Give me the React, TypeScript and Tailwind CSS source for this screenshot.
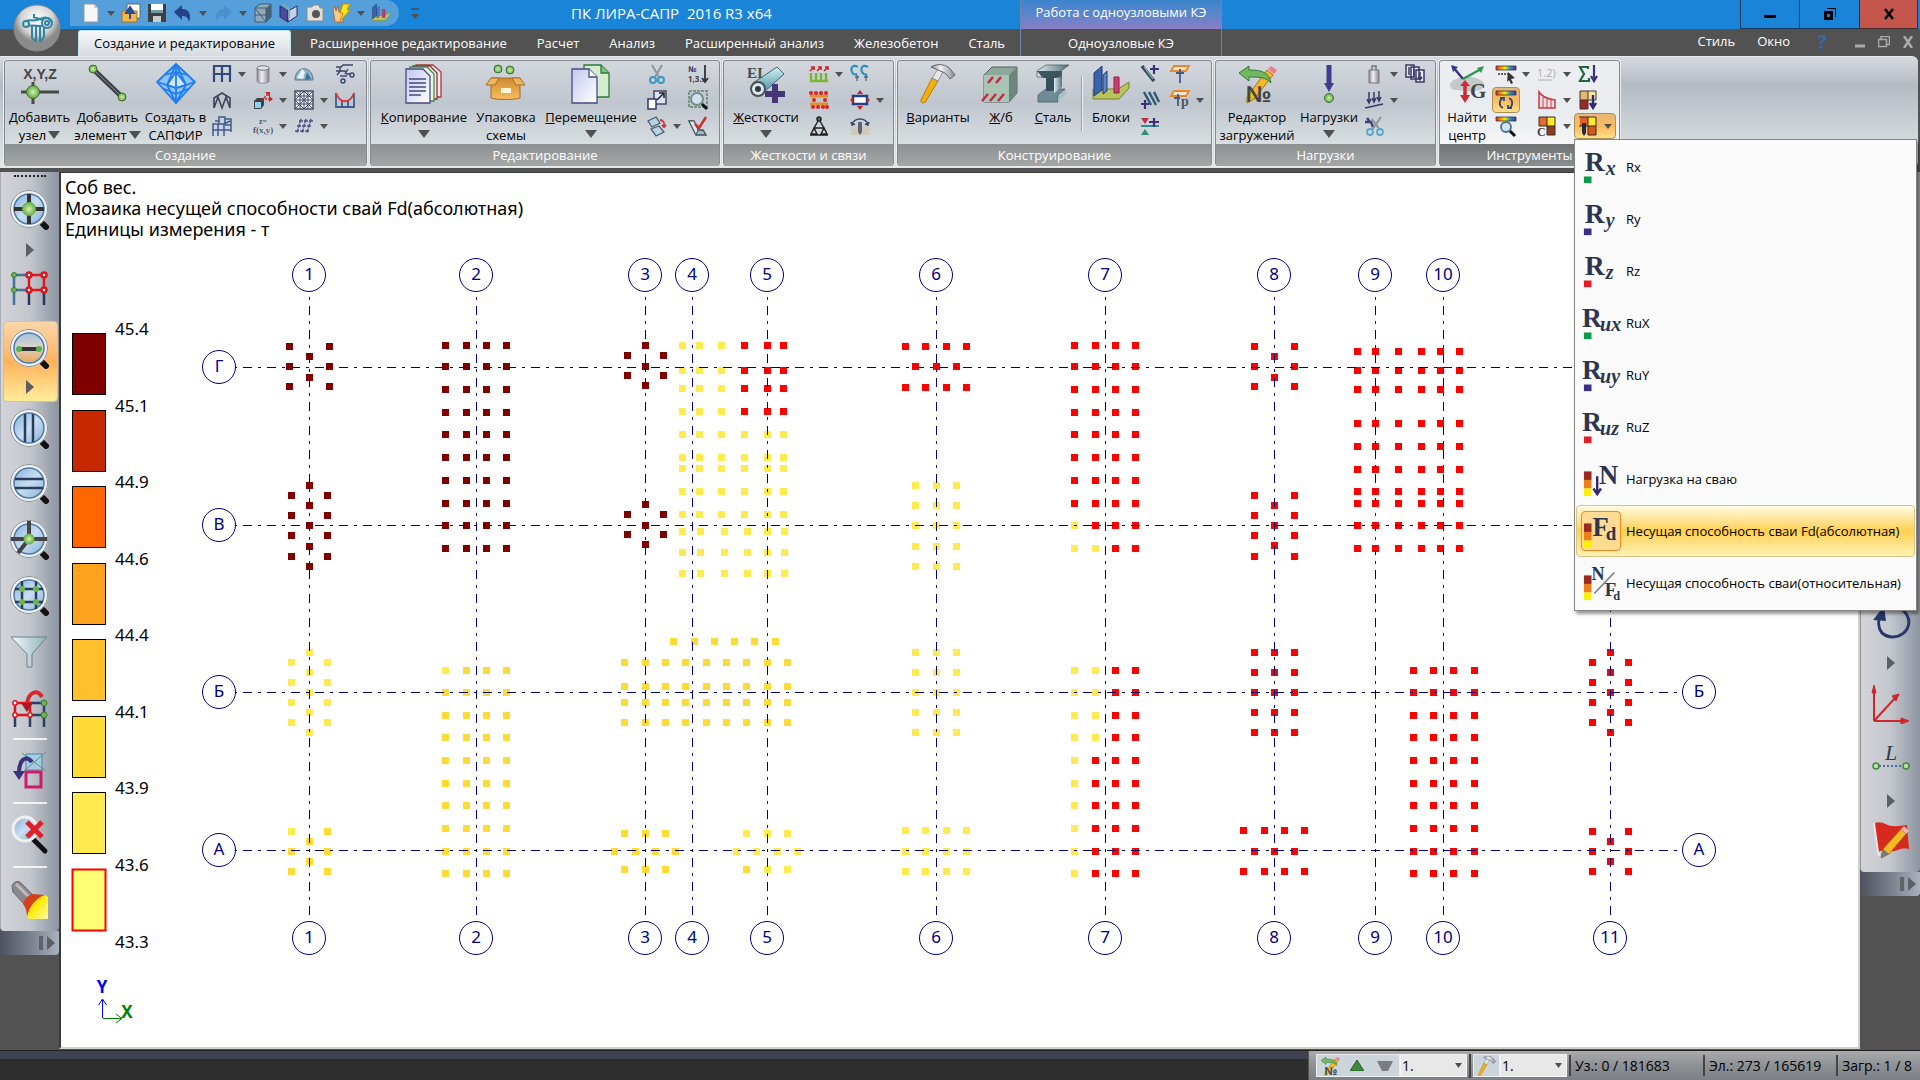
import type { ReactNode } from 'react';

const NAVY = '#000080';
const MAROON = '#800000';
const RED = '#ff0000';
const LIGHT = '#ffeb50';
const GOLD = '#ffdb38';

type Cluster = { c: string; x: number[]; y: number[] };

/* Piles: every cluster is the product of its x and y positions */
const rowsUpper = [345, 366, 389, 412, 434, 457, 480, 503, 525, 548];
const rowsLower = [670, 692, 715, 737, 760, 783, 805, 828, 851, 873];
const rowsB = [652, 672, 692, 712, 732];
const rowsBSide = [662, 682, 702, 722];

const clusters: Cluster[] = [
  { c: MAROON, x: [289, 329], y: [346, 366, 386] },
  { c: MAROON, x: [309], y: [356, 377] },
  { c: MAROON, x: [291, 327], y: [495, 515, 535, 556] },
  { c: MAROON, x: [309], y: [485, 505, 525, 546, 566] },
  { c: MAROON, x: [445, 466, 486, 506], y: rowsUpper },
  { c: MAROON, x: [627, 663], y: [355, 375, 514, 534] },
  { c: MAROON, x: [645], y: [345, 366, 385, 504, 525, 544] },
  { c: LIGHT, x: [682, 699, 721], y: [345, 370, 388, 411] },
  { c: RED, x: [744, 767, 783], y: [345, 370, 388, 411] },
  { c: LIGHT, x: [682, 699, 721, 744, 767, 783], y: [434, 457, 468, 491, 514] },
  { c: LIGHT, x: [682, 700, 724, 747, 767, 784], y: [531, 552, 573] },
  { c: RED, x: [905, 925, 946, 966], y: [346, 387] },
  { c: RED, x: [915, 936, 956], y: [366] },
  { c: LIGHT, x: [915, 936, 956], y: [485, 505, 525, 546, 566] },
  { c: RED, x: [1074, 1095, 1115, 1135], y: rowsUpper.slice(0, 8) },
  { c: LIGHT, x: [1074], y: [525, 548] },
  { c: RED, x: [1095], y: [525] },
  { c: LIGHT, x: [1095], y: [548] },
  { c: RED, x: [1115, 1135], y: [525, 548] },
  { c: RED, x: [1254, 1294], y: [346, 366, 386, 495, 515, 535, 556] },
  { c: RED, x: [1274], y: [356, 377, 505, 525, 545] },
  { c: RED, x: [1357, 1375, 1398, 1421, 1440, 1459], y: [351, 370, 389, 423, 446, 469, 491, 503, 525, 548] },
  { c: LIGHT, x: [291, 327], y: rowsBSide },
  { c: LIGHT, x: [309], y: rowsB },
  { c: LIGHT, x: [291], y: [831] },
  { c: GOLD, x: [327], y: [831] },
  { c: GOLD, x: [291, 327], y: [851, 871] },
  { c: GOLD, x: [309], y: [841, 861] },
  { c: LIGHT, x: [445], y: [670] },
  { c: GOLD, x: [466, 486, 506], y: [670] },
  { c: GOLD, x: [445, 466, 486, 506], y: rowsLower.slice(1) },
  { c: GOLD, x: [673, 694, 714, 734, 754, 775], y: [641] },
  { c: GOLD, x: [624, 645, 665, 685, 706, 726, 746, 767, 787], y: [662, 686, 702, 722] },
  { c: GOLD, x: [624, 645, 665], y: [833, 869] },
  { c: GOLD, x: [614, 635, 655, 675], y: [851] },
  { c: LIGHT, x: [746, 767, 787], y: [833] },
  { c: LIGHT, x: [736, 756, 777, 797], y: [851] },
  { c: GOLD, x: [746], y: [869] },
  { c: LIGHT, x: [767, 787], y: [869] },
  { c: LIGHT, x: [915, 936, 956], y: rowsB },
  { c: LIGHT, x: [905, 925, 946, 966], y: [830, 851, 871] },
  { c: LIGHT, x: [1074], y: rowsLower },
  { c: LIGHT, x: [1095], y: rowsLower.slice(0, 4) },
  { c: RED, x: [1095], y: rowsLower.slice(4) },
  { c: RED, x: [1115, 1135], y: rowsLower },
  { c: RED, x: [1254, 1274, 1294], y: rowsB },
  { c: RED, x: [1243, 1264, 1284, 1304], y: [830, 871] },
  { c: RED, x: [1254, 1274, 1294], y: [851] },
  { c: RED, x: [1413, 1433, 1453, 1474], y: rowsLower },
  { c: RED, x: [1592, 1628], y: [...rowsBSide, 831, 851, 871] },
  { c: RED, x: [1610], y: [...rowsB, 841, 861] },
];

const columnsAxes = [
  { n: '1', x: 309 }, { n: '2', x: 476 }, { n: '3', x: 645 }, { n: '4', x: 692 },
  { n: '5', x: 767 }, { n: '6', x: 936 }, { n: '7', x: 1105 }, { n: '8', x: 1274 },
  { n: '9', x: 1375 }, { n: '10', x: 1443 }, { n: '11', x: 1610 },
];

const rowAxes = [{ n: 'Г', y: 367 }, { n: 'В', y: 525 }, { n: 'Б', y: 692 }, { n: 'А', y: 850 }];

const legend = [
  { y: 333, c: '#800000', v: '45.4' },
  { y: 410, c: '#c62800', v: '45.1' },
  { y: 486, c: '#ff6600', v: '44.9' },
  { y: 563, c: '#ffa31f', v: '44.6' },
  { y: 639, c: '#ffc02b', v: '44.4' },
  { y: 716, c: '#ffdb38', v: '44.1' },
  { y: 792, c: '#ffeb50', v: '43.9' },
  { y: 869, c: '#ffff73', v: '43.6' },
];

function Bubble({ x, y, n }: { x: number; y: number; n: string }) {
  return (
    <g>
      <circle cx={x} cy={y} r="16.5" fill="#fff" stroke={NAVY} />
      <text x={x} y={y + 5} textAnchor="middle" fill={NAVY}>{n}</text>
    </g>
  );
}

function Plan() {
  return (
    <svg className="absolute inset-0 h-full w-full text-[17px]" role="img" aria-label="План свай">
      <g transform="translate(-61 -173)">
        {clusters.map((k, i) => (
          <g key={i} fill={k.c} shapeRendering="crispEdges">
            {k.x.map((x) => k.y.map((y) => <rect key={x + '-' + y} x={x - 3} y={y - 3} width="7" height="7" />))}
          </g>
        ))}

        {/* Axes */}
        <g stroke={NAVY} strokeDasharray="3 6 9 6" shapeRendering="crispEdges">
          {columnsAxes.map((a) => <path key={a.n} d={`M${a.x + 0.5} 297V915`} />)}
          {rowAxes.map((a) => <path key={a.n} d={`M234 ${a.y + 0.5}H1677`} />)}
        </g>
        {columnsAxes.map((a) => (
          <g key={a.n}>
            <Bubble x={a.x} y={275} n={a.n} />
            <Bubble x={a.x} y={938} n={a.n} />
          </g>
        ))}
        {rowAxes.map((a) => (
          <g key={a.n}>
            <Bubble x={219} y={a.y} n={a.n} />
            <Bubble x={1699} y={a.y} n={a.n} />
          </g>
        ))}

        {/* Legend */}
        {legend.map((l, i) => (
          <g key={l.v}>
            <rect x="72.5" y={l.y + 0.5} width="33" height="61" fill={l.c} stroke={i === 7 ? RED : '#000'} strokeWidth={i === 7 ? 2 : 1} />
            <text x="115" y={l.y + 2}>{l.v}</text>
          </g>
        ))}
        <text x="115" y="948">43.3</text>

        {/* Coordinate system */}
        <path d="M102.500 1018V999M98.500 1005L102.500 999L106.500 1005" fill="none" stroke="#00f" />
        <path d="M103 1018.500H122M116 1014L122 1018.500L116 1023" fill="none" stroke="#008000" />
        <text x="102" y="993" textAnchor="middle" className="font-bold" fill="#00f">Y</text>
        <text x="127" y="1018" textAnchor="middle" className="font-bold" fill="#008000">X</text>
      </g>
    </svg>
  );
}

/* 20x20 drawings */
const small: Record<string, ReactNode> = {
  frame: <path d="M2 18V2h16v16M10 2v16M2 10h16" fill="none" stroke="#2c4a7c" strokeWidth="2.2" />,
  truss: <path d="M2 18V8l8-5 8 5v10M2 18l4-11 4 11 4-11 4 11" fill="none" stroke="#3c4658" strokeWidth="1.6" />,
  frame3d: (
    <g fill="none" stroke="#3b5c93" strokeWidth="1.5">
      <path d="M1 20V8h11v12M1 14h11M6 8v12M7 8V1h6v7M13 3h6v13M13 9h6M12 8l6-3" />
      <path d="M3 5h4M12 14h7" />
    </g>
  ),
  cylinder: (
    <g>
      <path d="M4 4v13c0 3 12 3 12 0V4z" fill="url(#steel)" stroke="#77717e" strokeWidth=".7" />
      <ellipse cx="10" cy="4" rx="6" ry="2.200" fill="#e6e3ea" stroke="#77717e" />
    </g>
  ),
  extrude: (
    <g>
      <path d="M1 11l3-3h7v7l-3 4H1z" fill="#3d4248" />
      <path d="M2 12h6v6H2z" fill="#8fd0f0" />
      <path d="M9 10l6-6M12 9h7" fill="none" stroke="#c22" strokeWidth="1.6" strokeDasharray="2 1" />
      <path d="M12 2h5v5zM12 2v-1M16 6l4 3-4 3z" fill="#c22" />
    </g>
  ),
  func: (
    <g fill="#555d70" fontFamily="Liberation Serif, serif" fontWeight="bold">
      <text x="6" y="8" fontSize="8">z=</text>
      <text x="0" y="17" fontSize="9">f(x,y)</text>
    </g>
  ),
  dome: (
    <g>
      <path d="M1 16C1 1 19 1 19 16z" fill="#8db3cc" stroke="#5e7587" />
      <path d="M3 14l5-9 3 3-2 7z" fill="#e5f1f8" />
      <path d="M11 16l2-8 4 7z" fill="#3b7396" />
    </g>
  ),
  mesh: (
    <g>
      <path d="M1 1h18v18H1z" fill="#eef1f6" stroke="#444f68" strokeWidth="1.500" />
      <path d="M1 6h18M1 10h18M1 14h18M6 1v18M10 1v18M14 1v18M1 10l9-9 9 9-9 9zM1 1l18 18M19 1L1 19" fill="none" stroke="#444f68" />
    </g>
  ),
  raft: <path d="M5 5h14M3 10h14M1 15h14M7 3L3 17M12 3L8 17M17 3l-4 14" fill="none" stroke="#514f8c" strokeWidth="1.500" strokeDasharray="4 1" />,
  weld: (
    <g fill="none" stroke="#3d4470" strokeWidth="1.400">
      <path d="M1 3h5l2-2h10M5 3v4M1 7h9l2 3h4M2 11l4-5M13 5l-3 5" />
      <circle cx="17" cy="11" r="2" />
      <circle cx="8" cy="17" r="2" />
      <path d="M5 12h7" />
    </g>
  ),
  cable: (
    <g fill="none" strokeWidth="1.800">
      <path d="M1 18V3M19 18V3M1 17h18M7 11v6M13 11v6" stroke="#3b5c93" />
      <path d="M1 3c4 11 14 11 18 0" stroke="#d33" />
    </g>
  ),
  cut: (
    <g fill="none">
      <path d="M5 1l7 12M15 1L8 13" stroke="#8d96a0" strokeWidth="2" />
      <circle cx="6" cy="16" r="3" stroke="#3b97c4" strokeWidth="2" />
      <circle cx="14" cy="16" r="3" stroke="#3b97c4" strokeWidth="2" />
    </g>
  ),
  scale: (
    <g strokeWidth="1.500">
      <path d="M7 1h12v13H7z" fill="#dfe2f1" stroke="#444a66" />
      <path d="M1 9h8v10H1z" fill="#fff" stroke="#3a356f" />
      <path d="M10 10l6-6M12 3h5v5" fill="none" stroke="#222" />
    </g>
  ),
  rotate: (
    <g fill="#b8d3e6" stroke="#4a5d70" strokeWidth="1.300">
      <path d="M1 5l8-4 4 6-8 4zM4 13l8-3 5 6-8 4z" />
      <path d="M13 4c3 0 5 3 4 6M15 9l2 2 2-2" fill="none" stroke="#c33" strokeWidth="1.800" />
    </g>
  ),
  number: (
    <g>
      <text x="0" y="8" fontSize="8" fontWeight="bold" fill="#3a3a77">№</text>
      <text x="0" y="18" fontSize="8" fontWeight="bold" fill="#444">1,3..</text>
      <path d="M17 1v16M14 14l3 4 3-4" fill="none" stroke="#333" strokeWidth="1.800" />
    </g>
  ),
  find: (
    <g>
      <path d="M1 1h18v16H1z" fill="none" stroke="#5c8a62" strokeWidth="1.500" strokeDasharray="3 1" />
      <circle cx="9" cy="9" r="6" fill="#cfe2ee" stroke="#7b8a90" strokeWidth="2" />
      <path d="M14 14l5 5" stroke="#111" strokeWidth="3" />
    </g>
  ),
  check: (
    <g>
      <path d="M1 5l7 14h10l-3-5h-5L6 5z" fill="#9fb9cb" stroke="#41525f" strokeWidth="1.400" />
      <path d="M1 5h5l4 9-2 5z" fill="#dbe7ef" stroke="#41525f" />
      <path d="M7 8l4 4 7-11" fill="none" stroke="#c83030" strokeWidth="2.500" />
    </g>
  ),
  springs: (
    <g fill="none">
      <path d="M2 17V9M7 17V9M12 17V9M17 17V9M1 17h18" stroke="#7cb436" strokeWidth="2.500" />
      <path d="M1 7l4-4M8 7l4-4M15 7l4-4M2 3h3v3M9 3h3v3M16 3h3v3" stroke="#c22" strokeWidth="1.600" />
    </g>
  ),
  bedding: (
    <g>
      <path d="M1 6h18M1 14h18" stroke="#e2902b" strokeWidth="3" />
      {[2, 7, 12, 17].map((x) => <circle key={x} cx={x} cy="3" r="2" fill="#d22" />)}
      <circle cx="5" cy="10" r="2" fill="#d22" />
      <circle cx="16" cy="10" r="2" fill="#d22" />
      {[4, 9, 14, 18].map((x) => <circle key={x} cx={x} cy="17" r="2" fill="#d22" />)}
    </g>
  ),
  hinge: (
    <g fill="none" stroke="#222" strokeWidth="1.500">
      <circle cx="10" cy="3" r="2" fill="#2e7d6b" />
      <path d="M9 5l-4 7M11 5l4 7M5 12h10M5 12l-3 6h6zM15 12l-3 6h6zM1 19h18" />
    </g>
  ),
  cc: (
    <g>
      <path d="M8 3C3 0 0 4 2 8c1 2 3 3 5 2M18 3c-5-3-8 1-6 5 1 2 3 3 5 2" fill="none" stroke="#2a8fb8" strokeWidth="2" />
      <path d="M7 11v6M16 11v6M5 13h4M14 13h4" stroke="#567" strokeWidth="1.300" />
    </g>
  ),
  plate: (
    <g>
      <path d="M3 6h14v8H3z" fill="#fff" stroke="#2a3f80" strokeWidth="2.500" />
      <path d="M10 0l3 4H7zM10 20l3-4H7zM0 10l3-3v6zM20 10l-3-3v6z" fill="#c22" />
    </g>
  ),
  pile: (
    <g>
      <path d="M1 10h18v9H1z" fill="#cfcbb8" />
      <path d="M8 6h4v10l-2 3-2-3z" fill="#5e6478" />
      <path d="M2 9c2-8 14-8 16 0M1 6l1 3 3-1M19 6l-1 3-3-1" fill="none" stroke="#3c4274" strokeWidth="1.500" />
    </g>
  ),
  addbar: (
    <g fill="none">
      <path d="M2 2l12 15" stroke="#2f4756" strokeWidth="3.500" />
      <path d="M4 3l9 12" stroke="#8fb4c4" strokeWidth="1.200" />
      <path d="M10 5h9M14 1v9" stroke="#3b2f79" strokeWidth="2.200" />
    </g>
  ),
  addbars: (
    <g fill="none">
      <path d="M4 2l7 13M9 2l7 13M14 2l5 10" stroke="#2f5a75" strokeWidth="2.500" />
      <path d="M1 14h8M5 10v9" stroke="#3b2f79" strokeWidth="2.200" />
    </g>
  ),
  addnode: (
    <g>
      <path d="M1 2h8l-4 6z" fill="#bb3443" />
      <path d="M1 19h8l-4-6z" fill="#2f8c74" />
      <path d="M1 10h18" stroke="#2d8d90" strokeWidth="2" />
      <path d="M9 6h10M14 2v9" stroke="#3b2f79" strokeWidth="2.200" />
    </g>
  ),
  beamT: (
    <g fill="none">
      <path d="M4 2h15l-3 5H1z" fill="#fbe6cd" stroke="#e5872a" strokeWidth="1.800" />
      <path d="M10 5v14M6 9h8" stroke="#3f5c86" strokeWidth="1.800" />
    </g>
  ),
  beamP: (
    <g fill="none">
      <path d="M4 1h15l-3 5H1z" fill="#fbe6cd" stroke="#e5872a" strokeWidth="1.800" />
      <path d="M8 4v12M4 8h6" stroke="#3f5c86" strokeWidth="1.800" />
      <text x="11" y="16" fontSize="14" fontWeight="bold" fill="#555" fontFamily="Liberation Serif, serif">p</text>
    </g>
  ),
  weight: (
    <g>
      <path d="M5 6h10v13H5z" fill="url(#steel)" stroke="#777" />
      <path d="M8 6V2h4v4" fill="none" stroke="#777" strokeWidth="1.500" />
    </g>
  ),
  distload: <path d="M5 2v11M10 2v10M15 1v10M3 9l2 4 2-4M8 8l2 4 2-4M13 7l2 4 2-4M1 18l18-4" fill="none" stroke="#3a3768" strokeWidth="1.500" />,
  cutload: (
    <g fill="none">
      <path d="M1 6h6l2 5M3 2l3 4" stroke="#4b3c77" strokeWidth="2.500" />
      <path d="M17 1L8 14M8 3l8 11" stroke="#8b949e" strokeWidth="2" />
      <circle cx="6" cy="16" r="3" stroke="#5aa5cc" strokeWidth="1.800" />
      <circle cx="16" cy="16" r="3" stroke="#5aa5cc" strokeWidth="1.800" />
    </g>
  ),
  copyload: (
    <g stroke="#3a3768" strokeWidth="1.500">
      <path d="M1 1h8v12H1zM6 3h8v12H6zM11 6h8v12h-8z" fill="#eceaf7" />
      <path d="M4 3v8M9 5v8M15 8v8M13 13l2 3 2-3" fill="none" />
    </g>
  ),
  palcursor: (
    <g>
      <path d="M0 2h20v4H0z" fill="url(#rainbow)" stroke="#334" strokeWidth=".8" />
      <path d="M2 10h11" stroke="#333" strokeWidth="1.500" strokeDasharray="2 1" />
      <path d="M12 8l7 6-4 1 2 4-2 1-2-4-2 2z" fill="#333" />
    </g>
  ),
  palrefresh: (
    <g fill="none">
      <path d="M0 1h20v4H0z" fill="url(#rainbow)" stroke="#334" strokeWidth=".8" />
      <path d="M7 18a5.500 5.500 0 010-10M13 8a5.500 5.500 0 010 10M4 8h4v3M16 18h-4v-3" stroke="#2e4e66" strokeWidth="1.800" />
    </g>
  ),
  palfind: (
    <g>
      <path d="M0 1h20v4H0z" fill="url(#rainbow)" stroke="#334" strokeWidth=".8" />
      <circle cx="10" cy="11" r="5" fill="#cfe4f2" stroke="#4b718b" strokeWidth="1.800" />
      <path d="M14 15l5 5" stroke="#111" strokeWidth="3" />
    </g>
  ),
  n12: (
    <g fill="#a9abb0">
      <text x="0" y="13" fontSize="11">1.2)</text>
      <path d="M1 16h14" stroke="#a9abb0" />
    </g>
  ),
  diagram: (
    <g fill="none" stroke="#c43a48">
      <path d="M2 18V2c3 5 9 7 16 8v8z" fill="#f7dfe1" strokeWidth="1.500" />
      <path d="M6 7v11M10 9v9M14 10v8" />
    </g>
  ),
  cells: (
    <g>
      <path d="M2 1h8v9H2z" fill="#e0692b" />
      <path d="M10 1h8v9h-8z" fill="#ffe92e" />
      <path d="M10 10h8v9h-8z" fill="#8d3d1e" />
      <path d="M2 1h16v18h-8V1M2 10h16M2 1v9" fill="none" stroke="#3a2b24" />
      <text x="0" y="20" fontSize="12" fontFamily="Liberation Serif, serif" fill="#444" fontWeight="bold">C</text>
    </g>
  ),
  sigma: (
    <g>
      <path d="M10 5V3H2l4 7-4 7h9v-3" fill="none" stroke="#23653f" strokeWidth="2.200" />
      <path d="M16 1v14M13 12l3 5 3-5" fill="none" stroke="#3c3282" strokeWidth="2.200" />
    </g>
  ),
  cellsdown: (
    <g>
      <path d="M2 1h8v9H2z" fill="#e8b478" />
      <path d="M10 1h8v9h-8z" fill="#f5e6a2" />
      <path d="M2 10h8v9H2z" fill="#9b2a22" />
      <path d="M2 1h16v9H10V1M2 1v18h8v-9H2" fill="none" stroke="#45352c" />
      <path d="M15 5v11M12 13l3 5 3-5" fill="none" stroke="#33286f" strokeWidth="2.400" />
    </g>
  ),
  pilecells: (
    <g>
      <path d="M2 1h8v9H2z" fill="#e2602a" />
      <path d="M10 1h8v9h-8z" fill="#ffe92e" />
      <path d="M10 10h8v9h-8z" fill="#d2591f" />
      <path d="M1 1h17v18h-8V1M1 10h17" fill="none" stroke="#3a2b24" />
      <path d="M4 7h4v10l-2 3-2-3z" fill="#1d2a4a" />
    </g>
  ),
};

/* 40x40 drawings */
const big: Record<string, ReactNode> = {
  addNode: (
    <g>
      <text x="20" y="15" fontSize="14" textAnchor="middle" fill="#444" fontWeight="bold" fontFamily="Liberation Sans Narrow, sans-serif">X,Y,Z</text>
      <path d="M1 28h38M13 18v22" stroke="#474a47" strokeWidth="3" />
      <circle cx="13" cy="28" r="6.500" fill="url(#green)" stroke="#446a2f" />
    </g>
  ),
  addElement: (
    <g>
      <path d="M6 6l28 27" stroke="#3a3f45" strokeWidth="5" />
      <path d="M6 6l28 27" stroke="#8e959c" strokeWidth="1" />
      <circle cx="5" cy="5" r="4" fill="url(#green)" stroke="#446a2f" />
      <circle cx="34" cy="33" r="4" fill="url(#green)" stroke="#446a2f" />
    </g>
  ),
  sapfir: (
    <g fill="#8cc4fb" stroke="#1f7df2" strokeWidth="1.800" strokeLinejoin="round">
      <path d="M20 0l19 18-19 21L1 18z" />
      <path d="M20 8l10 13-10 3-9-3z" fill="#cfe8ff" />
      <path d="M20 0l-9 21 9 18 10-18zM1 18l10 3 9 3 10-3 9-3M8 11l12-3 12 3M6 24l14 6 14-6" fill="none" />
      <path d="M20 0v39" />
    </g>
  ),
  copy: (
    <g strokeWidth="1.300">
      <path d="M12 1h17l8 7v25H12z" fill="#f7ecec" stroke="#a8383d" />
      <path d="M9 2h17l7 7v26H9z" fill="#f7ecec" stroke="#8b2c34" />
      <path d="M6 3h17l7 7v27H6z" fill="#eef5ea" stroke="#3c8a46" />
      <path d="M2 5h17l7 7v27H2z" fill="url(#paper)" stroke="#454a82" />
      <path d="M5 15h17M5 19h17M5 23h17M5 27h17M5 31h12" stroke="#454a82" fill="none" />
    </g>
  ),
  box: (
    <g>
      <circle cx="12" cy="5" r="4" fill="url(#green)" stroke="#3f7040" />
      <circle cx="24" cy="6" r="4" fill="url(#green)" stroke="#3f7040" />
      <path d="M5 14h29v20c-6 2-23 2-29 0z" fill="url(#carton)" stroke="#a96a20" />
      <path d="M5 14L0 21h9l4-7zM34 14l5 7h-9l-4-7z" fill="#eeb661" stroke="#a96a20" />
      <path d="M15 24h10v5H15z" fill="#fff3d8" />
    </g>
  ),
  move: (
    <g strokeWidth="1.300">
      <path d="M13 1h17l8 8v24H13z" fill="#d5ecd0" stroke="#2c7a39" />
      <path d="M30 1v8h8" fill="#82c07d" stroke="#2c7a39" />
      <path d="M1 5h17l8 8v26H1z" fill="url(#paper)" stroke="#454a82" />
      <path d="M18 5v8h8" fill="#fff" stroke="#454a82" />
    </g>
  ),
  stiff: (
    <g>
      <path d="M7 19L31 3l7 7-22 20z" fill="url(#tube)" stroke="#3c6574" />
      <text x="1" y="14" fontSize="15" fontWeight="bold" fontFamily="Liberation Serif, serif" fill="#47504f">EI</text>
      <circle cx="12" cy="25" r="7" fill="#d9e8ec" stroke="#47515a" strokeWidth="2" />
      <circle cx="12" cy="25" r="3" fill="#333a44" />
      <path d="M19 30h20M29 20v19" stroke="#443678" strokeWidth="6" />
    </g>
  ),
  hammer: (
    <g>
      <path d="M20 17L8 37c-1 3-6 2-5-1L14 14z" fill="#f2b010" stroke="#b67a05" />
      <path d="M25 8l-5 9-6-3 6-9z" fill="#e4e6e7" stroke="#777" strokeWidth=".7" />
      <path d="M13 3c6-4 16-3 20 3l4 5-5 4-5-6c-5-2-9-4-14-6z" fill="url(#steel)" stroke="#666" />
    </g>
  ),
  concrete: (
    <g>
      <path d="M3 11l8-8h25v26l-8 9H3z" fill="#8ea89b" stroke="#506359" />
      <path d="M3 11h25v27H3z" fill="#a9c3b5" />
      <path d="M28 11l8-8v26l-8 9z" fill="#6c867b" />
      <path d="M7 19l5-6M15 19l5-6M1 37l6-7M9 37l6-7M17 37l6-7" stroke="#c4283c" strokeWidth="2.400" />
    </g>
  ),
  steel: (
    <g>
      <path d="M5 31l8-6h19l-7 6v7H5z" fill="#6f8d96" stroke="#3c5158" strokeWidth=".7" />
      <path d="M13 11h8v16h-8z" fill="#35505a" />
      <path d="M21 12l8-6v17l-8 6z" fill="url(#ibeam)" />
      <path d="M4 7l9-6h23l-8 6v6H4z" fill="url(#ibeam)" stroke="#3c5158" strokeWidth=".7" />
      <path d="M4 7h24v5l-5 2H10z" fill="#3b565f" />
      <path d="M25 33l8-8v5l-8 8z" fill="#a5bfc7" />
    </g>
  ),
  blocks: (
    <g>
      <path d="M2 25h25l11-7v6l-10 11H2z" fill="#b9c45a" stroke="#75802c" />
      <path d="M3 9l8-7v24l-8 6z" fill="#3b63ad" stroke="#1f3b78" />
      <path d="M12 11l4-4v20l-4 3z" fill="#5f84c4" stroke="#1f3b78" />
      <path d="M23 13h5v16h-5z" fill="#cf3a72" stroke="#8c1d49" />
    </g>
  ),
  editor: (
    <g>
      <path d="M10 33L30 6l6 5-19 24-7 4z" fill="#f6b823" stroke="#a6760e" />
      <path d="M31 5l3-3 6 4-3 4z" fill="#e8808a" />
      <path d="M2 9l10-7v4c12 0 20 2 22 13-5-6-12-6-22-6v4z" fill="#73b765" stroke="#2f7a32" />
      <text x="9" y="38" fontSize="23" fontWeight="bold" fill="#444" fontFamily="Liberation Sans, sans-serif">№</text>
    </g>
  ),
  load: (
    <g>
      <path d="M20 1v22" stroke="#413a8f" strokeWidth="5" />
      <path d="M15 19h10l-5 9z" fill="#413a8f" />
      <circle cx="20" cy="34" r="4.500" fill="url(#green)" stroke="#3f7040" />
    </g>
  ),
  centre: (
    <g>
      <path d="M3 20c6-10 28-9 34-1 2 7-8 9-16 8S2 28 3 20z" fill="#c3c8cb" />
      <path d="M6 3l10 12" stroke="#37368a" strokeWidth="2.500" />
      <path d="M16 15L34 5" stroke="#2c9950" strokeWidth="2.500" />
      <path d="M4 1l7 2-5 5z" fill="#37368a" />
      <path d="M37 2l-3 7-4-5z" fill="#2c9950" />
      <path d="M18 20v13" stroke="#d02a34" strokeWidth="3.500" />
      <path d="M13 22h10l-5-6zM13 31h10l-5 8z" fill="#d02a34" />
      <text x="23" y="34" fontSize="21" fontWeight="bold" fontFamily="Liberation Serif, serif" fill="#444">G</text>
    </g>
  ),
};

const disc = (
  <g>
    <path d="M29 30l7 7" stroke="#111" strokeWidth="6" strokeLinecap="round" />
    <circle cx="19" cy="19" r="17" fill="url(#lens)" stroke="#f2f2f2" strokeWidth="4" />
    <circle cx="19" cy="19" r="18.500" fill="none" stroke="#8a8f96" />
    <circle cx="19" cy="19" r="15" fill="none" stroke="#4d7bab" strokeWidth="1.500" />
  </g>
);

const side: Record<string, ReactNode> = {
  node: <g>{disc}<path d="M19 4v30M4 19h30" stroke="#333" strokeWidth="4" /><circle cx="19" cy="19" r="7" fill="url(#green)" /></g>,
  frames: (
    <g fill="none" strokeWidth="2.500">
      <path d="M4 6h15M4 21h15M4 6v30" stroke="#41729a" />
      <path d="M19 24v12M34 24v12" stroke="#27375c" />
      <path d="M19 6h15v15H19z" stroke="#e0141c" />
      <circle cx="4" cy="6" r="2.500" fill="#6cb54c" stroke="#397a34" strokeWidth="1" />
      <circle cx="4" cy="21" r="2.500" fill="#6cb54c" stroke="#397a34" strokeWidth="1" />
      {[[19, 6], [34, 6], [19, 21], [34, 21]].map(([x, y]) => <circle key={x + y * 50} cx={x} cy={y} r="2.500" fill="#fff" stroke="#e0141c" />)}
    </g>
  ),
  bar: (
    <g>
      {disc}
      <circle cx="19" cy="19" r="14" fill="url(#warm)" />
      <path d="M9 20h20" stroke="#333" strokeWidth="4" />
      <circle cx="9" cy="20" r="3" fill="#55b548" />
      <circle cx="29" cy="20" r="3" fill="#55b548" />
    </g>
  ),
  vert: <g>{disc}<path d="M15 5v28M23 5v28" stroke="#2a3c5c" strokeWidth="2.500" /></g>,
  horiz: <g>{disc}<path d="M5 15h28M5 24h28" stroke="#2a3c5c" strokeWidth="2.500" /></g>,
  tri: <g>{disc}<path d="M19 19V1M1 19h36M19 19L8 33" stroke="#444" strokeWidth="4" /><circle cx="19" cy="19" r="5.500" fill="url(#green)" /></g>,
  quad: (
    <g>
      {disc}
      <path d="M12 5v28M26 5v28M5 13h28M5 26h28" stroke="#2a3c5c" strokeWidth="2.500" />
      {[12, 26].map((x) => [13, 26].map((y) => <circle key={x + y * 50} cx={x} cy={y} r="3" fill="#6cb54c" />))}
    </g>
  ),
  funnel: <path d="M1 5h36L22 22v13h-5V22z" fill="url(#glass)" stroke="#69828c" />,
  redframe: (
    <g fill="none" strokeWidth="2.500">
      <path d="M34 14v24M20 27v11M20 14h14M20 26h14M5 27v11" stroke="#2b3f66" />
      <path d="M5 14h15v12H5z" stroke="#e0141c" />
      <path d="M32 8C28 0 18 2 17 16" stroke="#d8262c" strokeWidth="4" />
      <path d="M11 14h12l-6 9z" fill="#a81a20" />
      {[[5, 14], [5, 26], [20, 26]].map(([x, y]) => <circle key={x + y * 50} cx={x} cy={y} r="2.200" fill="#fff" stroke="#e0141c" strokeWidth="1.500" />)}
      <circle cx="34" cy="14" r="3" fill="#6cb54c" stroke="#397a34" strokeWidth="1" />
      <circle cx="34" cy="26" r="3" fill="#6cb54c" stroke="#397a34" strokeWidth="1" />
    </g>
  ),
  swap: (
    <g fill="none">
      <path d="M16 3h16v16H16z" fill="#a7cde6" stroke="#4585b0" />
      <path d="M12 2l24 18M36 1L14 20" stroke="#4b9b6b" />
      <path d="M22 11C16 3 9 9 9 22" stroke="#38337a" strokeWidth="4" />
      <path d="M3 20h12l-6 9z" fill="#38337a" />
      <path d="M16 21h15v15H16z" stroke="#d01a6c" strokeWidth="3" />
    </g>
  ),
  clear: (
    <g>
      <path d="M23 24l12 12" stroke="#111" strokeWidth="5" strokeLinecap="round" />
      <circle cx="15" cy="14" r="12" fill="url(#lens)" stroke="#f0f0f0" strokeWidth="3" />
      <path d="M17 7l15 15M32 7L17 22" stroke="#dd2229" strokeWidth="5" />
    </g>
  ),
  torch: (
    <g>
      <path d="M2 6c1-4 6-6 9-3l12 12-9 9L3 12z" fill="#8b888e" stroke="#66646a" />
      <path d="M6 4l13 13" stroke="#bdbbc0" strokeWidth="3" />
      <path d="M13 24c1-5 5-9 10-10l12 1-18 22c0-5-1-9-4-13z" fill="#d4401c" />
      <path d="M35 15c-9 3-16 11-18 22l2 2h19V17z" fill="url(#beam)" />
    </g>
  ),
  orbit: <g fill="none"><path d="M16 4a16 15 0 11-5 25c-4-5-4-12-2-17" stroke="#27396b" strokeWidth="3" /><path d="M2 16L13 2l2 15z" fill="#27396b" /></g>,
  axes: (
    <g stroke="#cf262c" strokeWidth="2" fill="#cf262c">
      <path d="M3 37V8M3 37h28M3 37l22-24" />
      <path d="M3 1l2 8H1zM38 37l-8 3v-6zM28 10l-3 7-4-5z" strokeWidth="1" />
    </g>
  ),
  length: (
    <g>
      <text x="20" y="21" textAnchor="middle" fontSize="22" fontStyle="italic" fontFamily="Liberation Serif, serif" fill="#333a4a">L</text>
      <path d="M8 27h24" stroke="#4c719c" strokeWidth="2" strokeDasharray="2 2" />
      <circle cx="5" cy="27" r="3" fill="#b8e2a0" stroke="#3f8a3c" strokeWidth="1.500" />
      <circle cx="35" cy="27" r="3" fill="#b8e2a0" stroke="#3f8a3c" strokeWidth="1.500" />
    </g>
  ),
  flag: (
    <g>
      <path d="M3 3l5 33" stroke="#e6e6e6" strokeWidth="2.500" />
      <path d="M4 3c7-3 12 3 18 3 5 1 9-1 14-1l2 24c-8-3-13 4-20 2-4-1-8-1-10 1z" fill="#d9281f" />
      <path d="M12 29L30 9l5 5-17 20-8 4z" fill="#f5b722" stroke="#8b6a12" strokeWidth=".8" />
      <path d="M30 9l3-3 5 5-3 3z" fill="#f0b2b2" />
      <path d="M12 29l6 5-8 4z" fill="#777" />
    </g>
  ),
};

function Defs() {
  return (
    <svg className="absolute h-0 w-0" aria-hidden="true">
      <defs>
        <linearGradient id="steel"><stop stopColor="#8a8790" /><stop offset=".4" stopColor="#f2f1f4" /><stop offset="1" stopColor="#8a8790" /></linearGradient>
        <linearGradient id="tube" x2="0" y2="1"><stop stopColor="#d5f0f4" /><stop offset="1" stopColor="#3f8b9b" /></linearGradient>
        <linearGradient id="ibeam"><stop stopColor="#dfeaee" /><stop offset="1" stopColor="#55737c" /></linearGradient>
        <linearGradient id="glass"><stop stopColor="#f4fafb" /><stop offset="1" stopColor="#8fb0ba" /></linearGradient>
        <linearGradient id="paper" x2="1" y2="1"><stop stopColor="#c3c8ef" /><stop offset="1" stopColor="#fff" /></linearGradient>
        <linearGradient id="carton" x2="0" y2="1"><stop stopColor="#d08a2e" /><stop offset="1" stopColor="#f6be62" /></linearGradient>
        <linearGradient id="beam" x2="1" y2="1"><stop stopColor="#f9a800" /><stop offset=".5" stopColor="#ffef14" /><stop offset="1" stopColor="#fff9a8" /></linearGradient>
        <linearGradient id="lens" x2="1" y2="1"><stop stopColor="#7fabd9" /><stop offset=".5" stopColor="#c9def1" /><stop offset="1" stopColor="#7ea9d6" /></linearGradient>
        <linearGradient id="warm" x2="0" y2="1"><stop stopColor="#a9c3d8" /><stop offset=".45" stopColor="#d9d4cc" /><stop offset="1" stopColor="#eea95c" /></linearGradient>
        <linearGradient id="rainbow"><stop stopColor="#d22" /><stop offset=".25" stopColor="#f90" /><stop offset=".45" stopColor="#fe0" /><stop offset=".7" stopColor="#29a" /><stop offset="1" stopColor="#62a" /></linearGradient>
        <radialGradient id="green"><stop stopColor="#d5f2a8" /><stop offset="1" stopColor="#5eaa45" /></radialGradient>
        <radialGradient id="orb" cy=".3"><stop stopColor="#fff" /><stop offset=".7" stopColor="#d3d3d3" /><stop offset="1" stopColor="#8b8b8b" /></radialGradient>
      </defs>
    </svg>
  );
}

function Down({ className = 'h-[5px] w-2' }: { className?: string }) {
  return <svg viewBox="0 0 8 5" preserveAspectRatio="none" className={`shrink-0 ${className}`}><path d="M0 0h8L4 5z" fill="#505050" /></svg>;
}

type BigProps = { icon: string; lines: string[]; w: string; arrow?: 'inline' | 'below'; mnemonic?: boolean };

function BigButton({ icon, lines, w, arrow, mnemonic }: BigProps) {
  return (
    <button className={`flex shrink-0 flex-col items-center pt-[3px] ${w}`}>
      <svg viewBox="0 0 40 40" className="mb-1 h-10 w-10 shrink-0 overflow-visible">{big[icon]}</svg>
      {lines.map((l, i) => (
        <span key={l} className="flex items-center gap-0.5 leading-[18px] whitespace-nowrap">
          <span>{mnemonic ? <><u>{l[0]}</u>{l.slice(1)}</> : l}</span>
          {arrow === 'inline' && i === 1 && <Down className="h-2 w-3" />}
        </span>
      ))}
      {arrow === 'below' && <Down className="mt-1 h-2 w-3" />}
    </button>
  );
}

/* A trailing "+" gives a drop-down arrow, a trailing "!" the pressed state */
function SmallColumn({ items, w = 'w-[41px]' }: { items: string[]; w?: string }) {
  return (
    <div className={`flex shrink-0 flex-col ${w}`}>
      {items.map((it) => {
        const name = it.replace(/[+!]/g, '');
        const on = it.includes('!');
        return (
          <button
            key={it}
            aria-label={name}
            className={`-ml-1 flex h-[26px] items-center gap-1.5 self-start rounded-sm border px-[3px] ${on ? 'border-[#a8905c] bg-linear-to-b from-[#e5b878] via-[#ffb85c] to-[#ffe08a]' : 'border-transparent'}`}
          >
            <svg viewBox="0 0 20 20" className="h-5 w-5 overflow-visible">{small[name]}</svg>
            {it.includes('+') && <Down />}
          </button>
        );
      })}
    </div>
  );
}

function Group({ title, w, children, active }: { title: string; w: string; children: ReactNode; active?: boolean }) {
  return (
    <section className={`flex shrink-0 flex-col rounded-[3px] border border-[#868a90] shadow-[0_0_0_1px_#e8eaec] ${w} ${active ? 'bg-linear-to-b from-[#eceef1] via-[#e9ecef] to-[#fbfcfc]' : 'bg-linear-to-b from-[#d3d7de] via-[#c0c6ce] via-40% to-[#e3eaea]'}`}>
      <div className="flex h-[83px] shrink-0">{children}</div>
      <h2 className={`flex-1 text-center leading-[22px] text-white ${active ? 'bg-linear-to-b from-[#707374] to-[#8c8f8f]' : 'bg-linear-to-b from-[#8e9191] to-[#a4a7a6]'}`}>{title}</h2>
    </section>
  );
}

function QuickAccess() {
  return (
    <div className="flex h-[26px] items-center gap-1.5 rounded-r-full bg-[#559fdb] pr-2 pl-[11px]">
      <button aria-label="Новый"><svg viewBox="0 0 20 20" className="h-5 w-5"><path d="M3 1h10l4 4v14H3z" fill="#f7f7f7" stroke="#999" /><path d="M13 1v4h4" fill="#ccc" /></svg></button>
      <Down />
      <button aria-label="Открыть"><svg viewBox="0 0 20 20" className="h-5 w-5"><path d="M6 1h13v14H6z" fill="#fff" stroke="#666" /><path d="M1 8h15v11H1z" fill="#f3b749" stroke="#a3741c" /><path d="M9 16V8M5 10l4-6 4 6z" fill="#2b4c90" stroke="#2b4c90" strokeWidth="2" /></svg></button>
      <button aria-label="Сохранить"><svg viewBox="0 0 20 20" className="h-5 w-5"><path d="M1 1h18v18H1z" fill="#3c3f44" /><path d="M4 1h12v9H4z" fill="#fff" /><path d="M6 13h8v6H6z" fill="#c9ccd0" /><path d="M4 7h12v3H4z" fill="#79a" /></svg></button>
      <button aria-label="Отменить"><svg viewBox="0 0 20 20" className="h-5 w-5"><path d="M1 9l8-7v4c6 0 10 4 7 13-1-5-3-6-7-6v4z" fill="#24418c" /></svg></button>
      <Down />
      <button aria-label="Повторить"><svg viewBox="0 0 20 20" className="h-5 w-5"><path d="M19 9l-8-7v4C5 6 1 10 4 19c1-5 3-6 7-6v4z" fill="#4a90cf" /></svg></button>
      <Down />
      <button aria-label="Модель"><svg viewBox="0 0 20 20" className="h-5 w-5"><path d="M2 5l5-4h11v13l-5 5H2z" fill="#8fabba" stroke="#3e5a6c" /><path d="M13 5l5-4v13l-5 5z" fill="#456373" /><path d="M2 5h11v14M2 12h11l5-5M2 5l11 14" fill="none" stroke="#3e5a6c" /></svg></button>
      <button aria-label="Документ"><svg viewBox="0 0 20 20" className="h-5 w-5"><path d="M1 3l8 5v11l-8-5z" fill="#4a4a9c" stroke="#2b2b70" /><path d="M9 8l9-5v10l-9 6z" fill="#c8cfe8" stroke="#2b2b70" /><path d="M4 1l6 5v9" fill="none" stroke="#7aa" strokeWidth="2" /></svg></button>
      <button aria-label="Снимок"><svg viewBox="0 0 20 20" className="h-5 w-5"><path d="M2 4h5l2-2h5l1 3h3v13H2z" fill="#e4e2dc" stroke="#8a8a84" /><circle cx="11" cy="11" r="5" fill="#555" stroke="#ddd" strokeWidth="2" /></svg></button>
      <button aria-label="Расчет"><svg viewBox="0 0 20 20" className="h-5 w-5"><path d="M2 7l2-4 1 5 2-5 1 6 4 1v9H4z" fill="#f6c98a" stroke="#a8722e" /><path d="M12 1h7l-3 6h3L9 18l3-8H9z" fill="#ffe31a" stroke="#d18c00" /></svg></button>
      <Down />
      <button aria-label="Блоки"><svg viewBox="0 0 40 40" className="h-5 w-5">{big.blocks}</svg></button>
    </div>
  );
}

const tabs = ['Расширенное редактирование', 'Расчет', 'Анализ', 'Расширенный анализ', 'Железобетон', 'Сталь'];

function Header() {
  return (
    <header className="relative flex h-14 shrink-0 bg-linear-to-b from-[#1a84d9] from-52% to-[#525252] to-52% text-white">
      <button aria-label="Меню приложения" className="absolute top-1 left-[13px] z-10">
        <svg viewBox="0 0 48 48" className="h-12 w-12">
          <circle cx="24" cy="24" r="23" fill="url(#orb)" stroke="#8a8a8a" />
          <g fill="none" stroke="#2f86a3" strokeWidth="2">
            <circle cx="13" cy="20" r="3" />
            <circle cx="34" cy="19" r="5" />
            <circle cx="34" cy="19" r="2" />
            <path d="M13 17c5-2 8 1 14-2s10-1 12 4M16 22c4-2 8 1 13 0M19 21v13l3 3M23 21v17M27 21v17M31 23v10l-4 5M20 13l10 3M21 10v4" />
          </g>
        </svg>
      </button>
      <div className="flex min-w-0 flex-1 flex-col">
        <div className="flex h-[29px] items-start pl-[70px]">
          <QuickAccess />
          <button aria-label="Настройка" className="mt-2 ml-3 flex h-3 w-2 flex-col items-center gap-1">
            <span className="h-0.5 w-2 shrink-0 bg-[#2c5c86]" />
            <Down />
          </button>
          <h1 className="ml-[152px] text-[15px] leading-[27px] whitespace-pre">ПК ЛИРА-САПР  2016 R3 x64</h1>
        </div>
        <nav className="flex h-[27px] pl-[78px]">
          <button className="mt-px mr-1 rounded-t-[3px] border border-b-0 border-[#bfe3ea] bg-linear-to-b from-[#f6f8f9] to-[#d7dbe1] px-[15px] pt-px whitespace-nowrap text-black">
            Создание и редактирование
          </button>
          {tabs.map((t) => (
            <button key={t} className="px-[15px] pt-[3px] whitespace-nowrap">{t}</button>
          ))}
        </nav>
      </div>
      <div className="flex w-[202px] shrink-0 flex-col border-x border-[#6f86a8] text-center">
        <span className="h-[29px] bg-linear-to-b from-[#3a84cc] via-[#5a86cc] to-[#8a7cc4] leading-[25px] whitespace-nowrap">Работа с одноузловыми КЭ</span>
        <button className="h-[27px] pt-[3px]">Одноузловые КЭ</button>
      </div>
      <div className="flex w-[698px] shrink-0 flex-col items-end">
        <div className="flex h-[29px] pr-0.5 text-black">
          <button aria-label="Свернуть" className="flex w-[60px] justify-center border border-t-0 border-[#16395a]"><span className="mt-[15px] h-[3px] w-3 bg-black" /></button>
          <button aria-label="Восстановить" className="flex w-[60px] items-center justify-center border border-t-0 border-l-0 border-[#16395a]">
            <svg viewBox="0 0 12 12" className="h-3 w-3"><path d="M1.500 4.500h6v6h-6z" fill="none" stroke="#000" strokeWidth="3" /><path d="M3 .5h8.500V9" fill="none" stroke="#000" /></svg>
          </button>
          <button aria-label="Закрыть" className="flex w-[58px] items-center justify-center border border-t-0 border-l-0 border-[#4b2a2a] bg-[#c4554d]">
            <svg viewBox="0 0 12 12" className="h-3 w-3"><path d="M2 1l8 10M10 1L2 11" stroke="#000" strokeWidth="2.500" /></svg>
          </button>
        </div>
        <div className="flex h-[27px] items-center gap-[22px] pr-[6px] pb-px">
          <button>Стиль</button>
          <button>Окно</button>
          <button aria-label="Справка" className="w-5 text-[20px] leading-5 font-bold text-[#3d66ad]">?</button>
          <span className="flex items-center gap-3">
            <svg viewBox="0 0 12 12" className="h-3 w-3"><path d="M1 10h10" stroke="#aaa" strokeWidth="3" /></svg>
            <svg viewBox="0 0 12 12" className="h-3 w-3"><path d="M.5 3.500h8v7h-8zM3 3V.5h8.500v8H9" fill="none" stroke="#aaa" strokeWidth="1.500" /></svg>
            <svg viewBox="0 0 12 12" className="h-3 w-3"><path d="M2 0l8 12M10 0L2 12" stroke="#aaa" strokeWidth="2.500" /></svg>
          </span>
        </div>
      </div>
    </header>
  );
}

function Ribbon() {
  return (
    <div className="mr-0.5 flex h-28 shrink-0 gap-[3px] rounded-r-md border-t border-[#e6e8ec] bg-linear-to-b from-[#d6d9e0] via-[#b5bbc4] via-25% to-[#e2e9e9] pt-[3px] pb-0.5 pl-1">
      <Group title="Создание" w="w-[363px]">
        <BigButton icon="addNode" lines={['Добавить', 'узел']} w="w-[69px]" arrow="inline" />
        <BigButton icon="addElement" lines={['Добавить', 'элемент']} w="w-[67px]" arrow="inline" />
        <BigButton icon="sapfir" lines={['Создать в', 'САПФИР']} w="w-[69px]" />
        <div className="ml-[2px] flex">
          <SmallColumn items={['frame+', 'truss', 'frame3d']} />
          <SmallColumn items={['cylinder+', 'extrude+', 'func+']} />
          <SmallColumn items={['dome', 'mesh+', 'raft+']} />
          <SmallColumn items={['weld', 'cable']} w="w-7" />
        </div>
      </Group>
      <Group title="Редактирование" w="w-[350px]">
        <div className="w-2 shrink-0" />
        <BigButton icon="copy" lines={['Копирование']} w="w-[90px]" arrow="below" mnemonic />
        <BigButton icon="box" lines={['Упаковка', 'схемы']} w="w-[74px]" />
        <BigButton icon="move" lines={['Перемещение']} w="w-[96px]" arrow="below" mnemonic />
        <div className="ml-2 flex">
          <SmallColumn items={['cut', 'scale', 'rotate+']} />
          <SmallColumn items={['number', 'find', 'check']} w="w-7" />
        </div>
      </Group>
      <Group title="Жесткости и связи" w="w-[171px]">
        <div className="w-1 shrink-0" />
        <BigButton icon="stiff" lines={['Жесткости']} w="w-[76px]" arrow="below" mnemonic />
        <div className="ml-[5px] flex">
          <SmallColumn items={['springs+', 'bedding', 'hinge']} />
          <SmallColumn items={['cc', 'plate+', 'pile']} />
        </div>
      </Group>
      <Group title="Конструирование" w="w-[315px]">
        <div className="w-1 shrink-0" />
        <BigButton icon="hammer" lines={['Варианты']} w="w-[72px]" mnemonic />
        <BigButton icon="concrete" lines={['Ж/б']} w="w-[54px]" mnemonic />
        <BigButton icon="steel" lines={['Сталь']} w="w-[50px]" mnemonic />
        <div className="mt-4 ml-[3px] h-[54px] w-px shrink-0 bg-[#9aa0a6] shadow-[1px_0_0_#eef0f2]" />
        <BigButton icon="blocks" lines={['Блоки']} w="w-[58px]" />
        <SmallColumn items={['addbar', 'addbars', 'addnode']} w="w-[30px]" />
        <SmallColumn items={['beamT', 'beamP+']} />
      </Group>
      <Group title="Нагрузки" w="w-[221px]">
        <BigButton icon="editor" lines={['Редактор', 'загружений']} w="w-[82px]" />
        <BigButton icon="load" lines={['Нагрузки']} w="w-[62px]" arrow="below" />
        <div className="ml-1 flex">
          <SmallColumn items={['weight+', 'distload+', 'cutload']} />
          <SmallColumn items={['copyload']} w="w-7" />
        </div>
      </Group>
      <Group title="Инструменты" w="w-[181px]" active>
        <BigButton icon="centre" lines={['Найти', 'центр']} w="w-[54px]" />
        <div className="ml-0.5 flex">
          <SmallColumn items={['palcursor+', 'palrefresh!', 'palfind']} />
          <SmallColumn items={['n12+', 'diagram+', 'cells+']} />
          <SmallColumn items={['sigma', 'cellsdown', 'pilecells+!']} />
        </div>
      </Group>
    </div>
  );
}

function Right() {
  return <svg viewBox="0 0 8 14" className="h-[14px] w-2 shrink-0"><path d="M0 0l8 7-8 7z" fill="#5c5f64" /></svg>;
}

function Tool({ name, h = 'h-14' }: { name: string; h?: string }) {
  return (
    <button aria-label={name} className={`flex w-full shrink-0 items-center justify-center ${h}`}>
      <svg viewBox="0 0 40 40" className="h-10 w-10">{side[name]}</svg>
    </button>
  );
}

function Overflow() {
  return (
    <button aria-label="Ещё" className="flex h-6 w-full shrink-0 items-center justify-end gap-1 rounded-b bg-linear-to-r from-[#4c525e] to-[#a9b1bd] pr-1">
      <span className="h-[14px] w-1 bg-[#5f6267]" />
      <Right />
    </button>
  );
}

const Sep = () => <hr className="w-[34px] border-t-2 border-white/80" />;

function LeftTools() {
  return (
    <aside className="flex w-[59px] shrink-0 flex-col">
      <div className="flex h-[759px] flex-col items-center rounded-b border-l border-[#a7adb6] bg-linear-to-r from-[#d2d4d8] via-[#c3c7cd] to-[#8d95a1]">
        <span className="mt-[3px] h-0.5 w-8 border-t-2 border-dotted border-[#222]" />
        <Tool name="node" h="h-[66px]" />
        <Right />
        <Tool name="frames" h="h-[64px]" />
        <div className="flex h-[81px] w-[55px] shrink-0 flex-col items-center rounded-sm border border-[#c9c4b4] bg-linear-to-b from-[#fbd6a8] via-[#ffb25a] to-[#ffec9a]">
          <Tool name="bar" h="h-[54px]" />
          <span className="mt-1 flex"><Right /></span>
        </div>
        <Tool name="vert" h="h-[54px]" />
        <Tool name="horiz" />
        <Tool name="tri" />
        <Tool name="quad" />
        <Tool name="funnel" />
        <Tool name="redframe" h="h-[58px]" />
        <Sep />
        <Tool name="swap" h="h-[62px]" />
        <Sep />
        <Tool name="clear" h="h-[62px]" />
        <Sep />
        <Tool name="torch" h="h-16" />
      </div>
      <Overflow />
    </aside>
  );
}

function RightTools() {
  return (
    <aside className="flex w-[60px] shrink-0 flex-col">
      <div className="flex h-[700px] flex-col items-center justify-end rounded-b border-l border-[#8b93a0] bg-linear-to-r from-[#d2d4d8] via-[#c3c7cd] to-[#8d95a1]">
        <Tool name="orbit" />
        <span className="mt-1 mb-[7px] flex"><Right /></span>
        <Tool name="axes" h="h-[54px]" />
        <Tool name="length" />
        <span className="mt-[7px] flex"><Right /></span>
        <Tool name="flag" h="h-16" />
      </div>
      <Overflow />
    </aside>
  );
}

const bars = (
  <g>
    <path d="M2 16h8v9H2z" fill="#9a2a20" />
    <path d="M2 25h8v9H2z" fill="#ee7d1c" />
    <path d="M2 34h8v8H2z" fill="#fff000" />
  </g>
);

type MenuItem = { label: string; sub?: string; dot?: string; art?: ReactNode; on?: boolean };

const menu: MenuItem[] = [
  { label: 'Rx', sub: 'x', dot: '#0a9a48' },
  { label: 'Ry', sub: 'y', dot: '#39308a' },
  { label: 'Rz', sub: 'z', dot: '#e31e26' },
  { label: 'RuX', sub: 'ux', dot: '#0a9a48' },
  { label: 'RuY', sub: 'uy', dot: '#39308a' },
  { label: 'RuZ', sub: 'uz', dot: '#e31e26' },
  {
    label: 'Нагрузка на сваю',
    art: <g>{bars}<text x="18" y="29" fontSize="28">N</text><path d="M16 21v18M12 34l4 6 4-6" fill="none" stroke="#33286f" strokeWidth="2.500" /></g>,
  },
  {
    label: 'Несущая способность сваи Fd(абсолютная)',
    art: <g>{bars}<text x="11" y="29" fontSize="28">F</text><text x="25" y="33" fontSize="20">d</text></g>,
    on: true,
  },
  {
    label: 'Несущая способность сваи(относительная)',
    art: <g>{bars}<text x="10" y="21" fontSize="19">N</text><path d="M13 35L34 13" stroke="#777" strokeWidth="1.500" /><text x="24" y="38" fontSize="20">F</text><text x="33" y="42" fontSize="13">d</text></g>,
  },
];

function Menu() {
  return (
    <ul className="absolute top-[139px] right-[3px] z-20 w-[343px] border border-[#868686] bg-[#fafafa] p-px text-[13px] shadow-[2px_3px_3px_rgba(0,0,0,.4)]">
      {menu.map((m) => (
        <li key={m.label}>
          <button className={`flex h-[52px] w-full items-center gap-[5px] rounded-sm border pl-1 text-left whitespace-nowrap ${m.on ? 'border-[#d8c48a] bg-linear-to-b from-[#fffbe0] via-[#ffd04a] to-[#fff2b4]' : 'border-transparent'}`}>
            <svg viewBox="0 4 40 40" className={`h-10 w-10 overflow-visible rounded-sm border ${m.on ? 'border-[#f08a2c] bg-[#fddc92]' : 'border-transparent'}`} fill="#2c3450" fontFamily="Liberation Serif, serif" fontWeight="bold">
              {m.art ?? (
                <g>
                  <text x={m.sub!.length > 1 ? 0 : 3} y="28" fontSize="29">R</text>
                  <text x={m.sub!.length > 1 ? 19 : 25} y="32" fontSize="21" fontStyle="italic">{m.sub}</text>
                  <path d="M2 34h8v7H2z" fill={m.dot} />
                </g>
              )}
            </svg>
            <span className="pt-0.5">{m.label}</span>
          </button>
        </li>
      ))}
    </ul>
  );
}

function StatusSelect({ label }: { label: string }) {
  return (
    <span className="relative flex h-[23px] w-[67px] border border-[#f4f4f4] bg-[#e8e8e8]">
      <select aria-label={label} className="w-full appearance-none pl-px text-[14px] leading-5 outline-none" defaultValue="1."><option>1.</option></select>
      <Down className="pointer-events-none absolute top-2 right-1 h-[5px] w-[7px]" />
    </span>
  );
}

function StatusBar() {
  return (
    <footer className="flex h-[30px] shrink-0 border-t border-[#222] bg-linear-to-b from-[#3f4250] from-28% to-[#2e2e2e] to-28% text-[14px]">
      <div className="flex-1" />
      <div className="flex items-center border-l border-[#555] bg-linear-to-b from-[#a9abac] via-[#8e9194] to-[#7c8085] pl-[7px]">
        <div className="flex h-[23px] border border-[#eee] bg-[#ccd5db]">
          <button aria-label="Редактор загружений" className="flex w-[26px] items-center justify-center"><svg viewBox="0 0 40 40" className="h-5 w-5">{big.editor}</svg></button>
          <button aria-label="Следующее" className="flex w-7 items-center justify-center"><svg viewBox="0 0 14 11" className="h-[11px] w-[14px]"><path d="M7 0l7 11H0z" fill="#3f8a3c" stroke="#275c28" /></svg></button>
          <button aria-label="Предыдущее" className="flex w-7 items-center justify-center"><svg viewBox="0 0 16 11" className="h-[11px] w-4"><path d="M0 1h16l-5 10H5z" fill="#7b7d80" /></svg></button>
        </div>
        <StatusSelect label="Загружение" />
        <span className="mx-[2px] h-6 w-0.5 bg-[#444]" />
        <button aria-label="Варианты" className="flex h-[23px] w-[27px] items-center justify-center border border-[#eee] bg-[#ccd5db]"><svg viewBox="0 0 40 40" className="h-5 w-5">{big.hammer}</svg></button>
        <StatusSelect label="Вариант" />
        <span className="ml-0.5 w-[134px] border-l-2 border-[#444] pl-1 whitespace-nowrap">Уз.: 0 / 181683</span>
        <span className="w-[133px] border-l-2 border-[#444] pl-1 whitespace-nowrap">Эл.: 273 / 165619</span>
        <span className="w-[84px] border-l-2 border-[#444] pl-1 whitespace-nowrap">Загр.: 1 / 8</span>
      </div>
    </footer>
  );
}

export default function App() {
  return (
    <div className="relative flex h-screen flex-col overflow-hidden bg-[#525252] font-['Open_Sans','Noto_Sans',sans-serif] text-[13px] text-black">
      <Defs />
      <Header />
      <Ribbon />
      <div className="mt-1 flex min-h-0 flex-1">
        <LeftTools />
        <main className="relative mb-px min-w-0 flex-1 border-t border-r-2 border-b-2 border-l-2 border-t-[#3a3a3a] border-r-[#d4d0c8] border-b-[#d4d0c8] border-l-[#3a3a3a] bg-white font-['Noto_Sans',sans-serif]">
          <Plan />
          <div className="relative p-1 text-[18px] leading-[21px]">
            <p>Соб вес.</p>
            <p>Мозаика несущей способности свай Fd(абсолютная)</p>
            <p>Единицы измерения - т</p>
          </div>
        </main>
        <RightTools />
      </div>
      <StatusBar />
      <Menu />
    </div>
  );
}
